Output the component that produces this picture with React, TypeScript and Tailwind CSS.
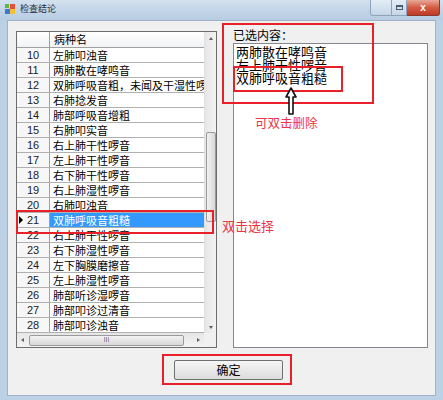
import React from "react";

const rows: [number, string][] = [
  [10, "左肺叩浊音"],
  [11, "两肺散在哮鸣音"],
  [12, "双肺呼吸音粗，未闻及干湿性啰音"],
  [13, "右肺捻发音"],
  [14, "肺部呼吸音增粗"],
  [15, "右肺叩实音"],
  [16, "右上肺干性啰音"],
  [17, "左上肺干性啰音"],
  [18, "右下肺干性啰音"],
  [19, "右上肺湿性啰音"],
  [20, "右肺叩浊音"],
  [21, "双肺呼吸音粗糙"],
  [22, "右上肺干性啰音"],
  [23, "右下肺湿性啰音"],
  [24, "左下胸膜磨擦音"],
  [25, "左上肺湿性啰音"],
  [26, "肺部听诊湿啰音"],
  [27, "肺部叩诊过清音"],
  [28, "肺部叩诊浊音"],
];

const picked = ["两肺散在哮鸣音", "左上肺干性啰音", "双肺呼吸音粗糙"];

const cjk = { fontFamily: '"Noto Sans CJK SC", "Liberation Sans", sans-serif' };

export default function App() {
  return (
    <div
      className="relative w-[443px] h-[400px] overflow-hidden bg-[#bcd0e6] flex flex-col text-black"
      style={cjk}
    >
      <TitleBar />
      <div className="flex flex-1 px-[7px] pb-[4px]">
        <div className="flex-1 bg-[#f0f0f0] border border-[#9fb2c8] flex flex-col pt-[10px] pl-[8px] pr-[7px]">
          <div className="flex">
            <Grid />
            <div className="ml-[16px] flex-1 flex flex-col">
              <div className="text-[12px] leading-[12px] mt-[-2px] mb-[2px] h-[12px]">已选内容：</div>
              <div className="h-[305px] bg-white border border-[#828790] pt-[1px] pl-[2px]">
                {picked.map((p) => (
                  <div key={p} className="text-[13px] leading-[13px] h-[13px] whitespace-nowrap">
                    {p}
                  </div>
                ))}
              </div>
            </div>
          </div>
          <div className="mt-[12px] ml-[158px] w-[109px] h-[20px] border border-[#707070] rounded-[2px] bg-gradient-to-b from-[#f6f6f6] to-[#dcdcdc] flex items-center justify-center text-[12px]">
            确定
          </div>
        </div>
      </div>

      {/* annotations */}
      <div className="absolute left-[16px] top-[210px] w-[198px] h-[24px] border-2 border-[#e8202a]" />
      <div className="absolute left-[222px] top-[218px] text-[13px] leading-[16px] text-[#ee3344]">双击选择</div>
      <div className="absolute left-[222px] top-[23px] w-[152px] h-[81px] border-2 border-[#e8202a]" />
      <div className="absolute left-[233px] top-[66px] w-[110px] h-[26px] border-2 border-[#e8202a]" />
      <svg className="absolute left-[285px] top-[87px]" width="12" height="28" viewBox="0 0 12 28">
        <path d="M6 1 L11 10 L8 10 L8 27 L4 27 L4 10 L1 10 Z" fill="#fff" stroke="#111" strokeWidth="1.6" strokeLinejoin="round" />
      </svg>
      <div className="absolute left-[255px] top-[115px] text-[12.5px] leading-[16px] text-[#ee3344]">可双击删除</div>
      <div className="absolute left-[162px] top-[354px] w-[130px] h-[31px] border-2 border-[#e8202a]" />
    </div>
  );
}

function TitleBar() {
  return (
    <div className="h-[20px] flex items-start bg-gradient-to-b from-[#d4e1ee] via-[#c3d5e8] to-[#b8cce2]">
      <svg className="mt-[4px] ml-[5px]" width="11" height="11" viewBox="0 0 11 11">
        <rect x="0" y="5" width="5" height="5" fill="#3b7bd8" />
        <rect x="5" y="0" width="5" height="5" fill="#e84c3a" />
        <rect x="5" y="5" width="5" height="5" fill="#f2c230" />
        <rect x="0" y="0" width="4" height="4" fill="#5bb84a" />
      </svg>
      <div className="ml-[4px] mt-[3px] text-[9px] leading-[12px] text-[#1e2a3a]">检查结论</div>
      <div className="flex-1" />
      <div className="flex mr-[3px]">
        <div className="w-[22px] h-[16px] rounded-bl-[3px] border border-[#8ea4bd] border-t-0 bg-gradient-to-b from-[#e4edf6] to-[#c6d6e7]" />
        <div className="w-[15px] h-[16px] border border-[#8ea4bd] border-t-0 border-l-0 bg-gradient-to-b from-[#e4edf6] to-[#c6d6e7] flex items-center justify-center">
          <div className="w-[7px] h-[5px] border border-[#4a5a6e] border-t-2" />
        </div>
        <div className="w-[33px] h-[16px] rounded-br-[3px] border border-[#8a3a30] border-t-0 border-l-0 bg-gradient-to-b from-[#e9a89a] via-[#d45a44] to-[#c03a22] flex items-center justify-center text-white text-[10px] font-bold leading-none" style={{ fontFamily: '"Liberation Sans", sans-serif' }}>
          x
        </div>
      </div>
    </div>
  );
}

function Grid() {
  return (
    <div className="w-[201px] h-[317px] border border-[#6d6d6d] bg-white flex flex-col">
      <div className="flex h-[301px]">
        <div className="w-[187px] flex flex-col overflow-hidden">
          <div className="flex h-[16px] shrink-0 border-b border-[#a0a0a0] bg-gradient-to-b from-[#ffffff] to-[#f1f2f4]">
            <div className="w-[33px] border-r border-[#a0a0a0]" />
            <div className="pl-[4px] text-[11px] leading-[15px]">病种名</div>
          </div>
          {rows.map(([n, t]) => {
            const sel = n === 21;
            return (
              <div key={n} className="flex h-[15px] shrink-0 border-b border-[#b0b0b0]">
                <div className="w-[33px] shrink-0 border-r border-[#a0a0a0] bg-[#f7f7f7] relative flex items-center justify-center text-[11px] leading-[14px] text-[#222]" style={{ fontFamily: '"Liberation Sans", sans-serif' }}>
                  {sel && <span className="absolute left-[2px] top-[3px] w-0 h-0 border-y-[4px] border-y-transparent border-l-[4px] border-l-black" />}
                  {n}
                </div>
                <div className={`flex-1 pl-[3px] text-[11px] leading-[14px] whitespace-nowrap overflow-hidden ${sel ? "bg-[#3399ff] text-white" : ""}`}>
                  {t}
                </div>
              </div>
            );
          })}
        </div>
        <div className="w-[12px] bg-gradient-to-r from-[#e6e6e6] to-[#f3f3f3] border-l border-[#e0e0e0] flex flex-col items-center">
          <div className="mt-[5px] w-0 h-0 border-x-[2px] border-x-transparent border-b-[3px] border-b-[#606060]" />
          <div className="mt-[92px] w-[10px] h-[90px] rounded-[2px] border border-[#9a9a9a] bg-gradient-to-r from-[#f2f2f2] to-[#d8d8d8]" />
          <div className="flex-1" />
          <div className="mb-[4px] w-0 h-0 border-x-[2px] border-x-transparent border-t-[3px] border-t-[#606060]" />
        </div>
      </div>
      <div className="flex flex-1">
        <div className="w-[187px] bg-gradient-to-b from-[#e6e6e6] to-[#f3f3f3] flex items-center px-[4px]">
          <div className="w-0 h-0 border-y-[2px] border-y-transparent border-r-[3px] border-r-[#606060]" />
          <div className="ml-[5px] w-[155px] h-[11px] rounded-[2px] border border-[#9a9a9a] bg-gradient-to-b from-[#f2f2f2] to-[#d8d8d8] flex items-center justify-center text-[6px] leading-none text-[#555]">
            III
          </div>
          <div className="flex-1" />
          <div className="w-0 h-0 border-y-[2px] border-y-transparent border-l-[3px] border-l-[#606060]" />
        </div>
        <div className="flex-1 bg-[#f0f0f0]" />
      </div>
    </div>
  );
}
